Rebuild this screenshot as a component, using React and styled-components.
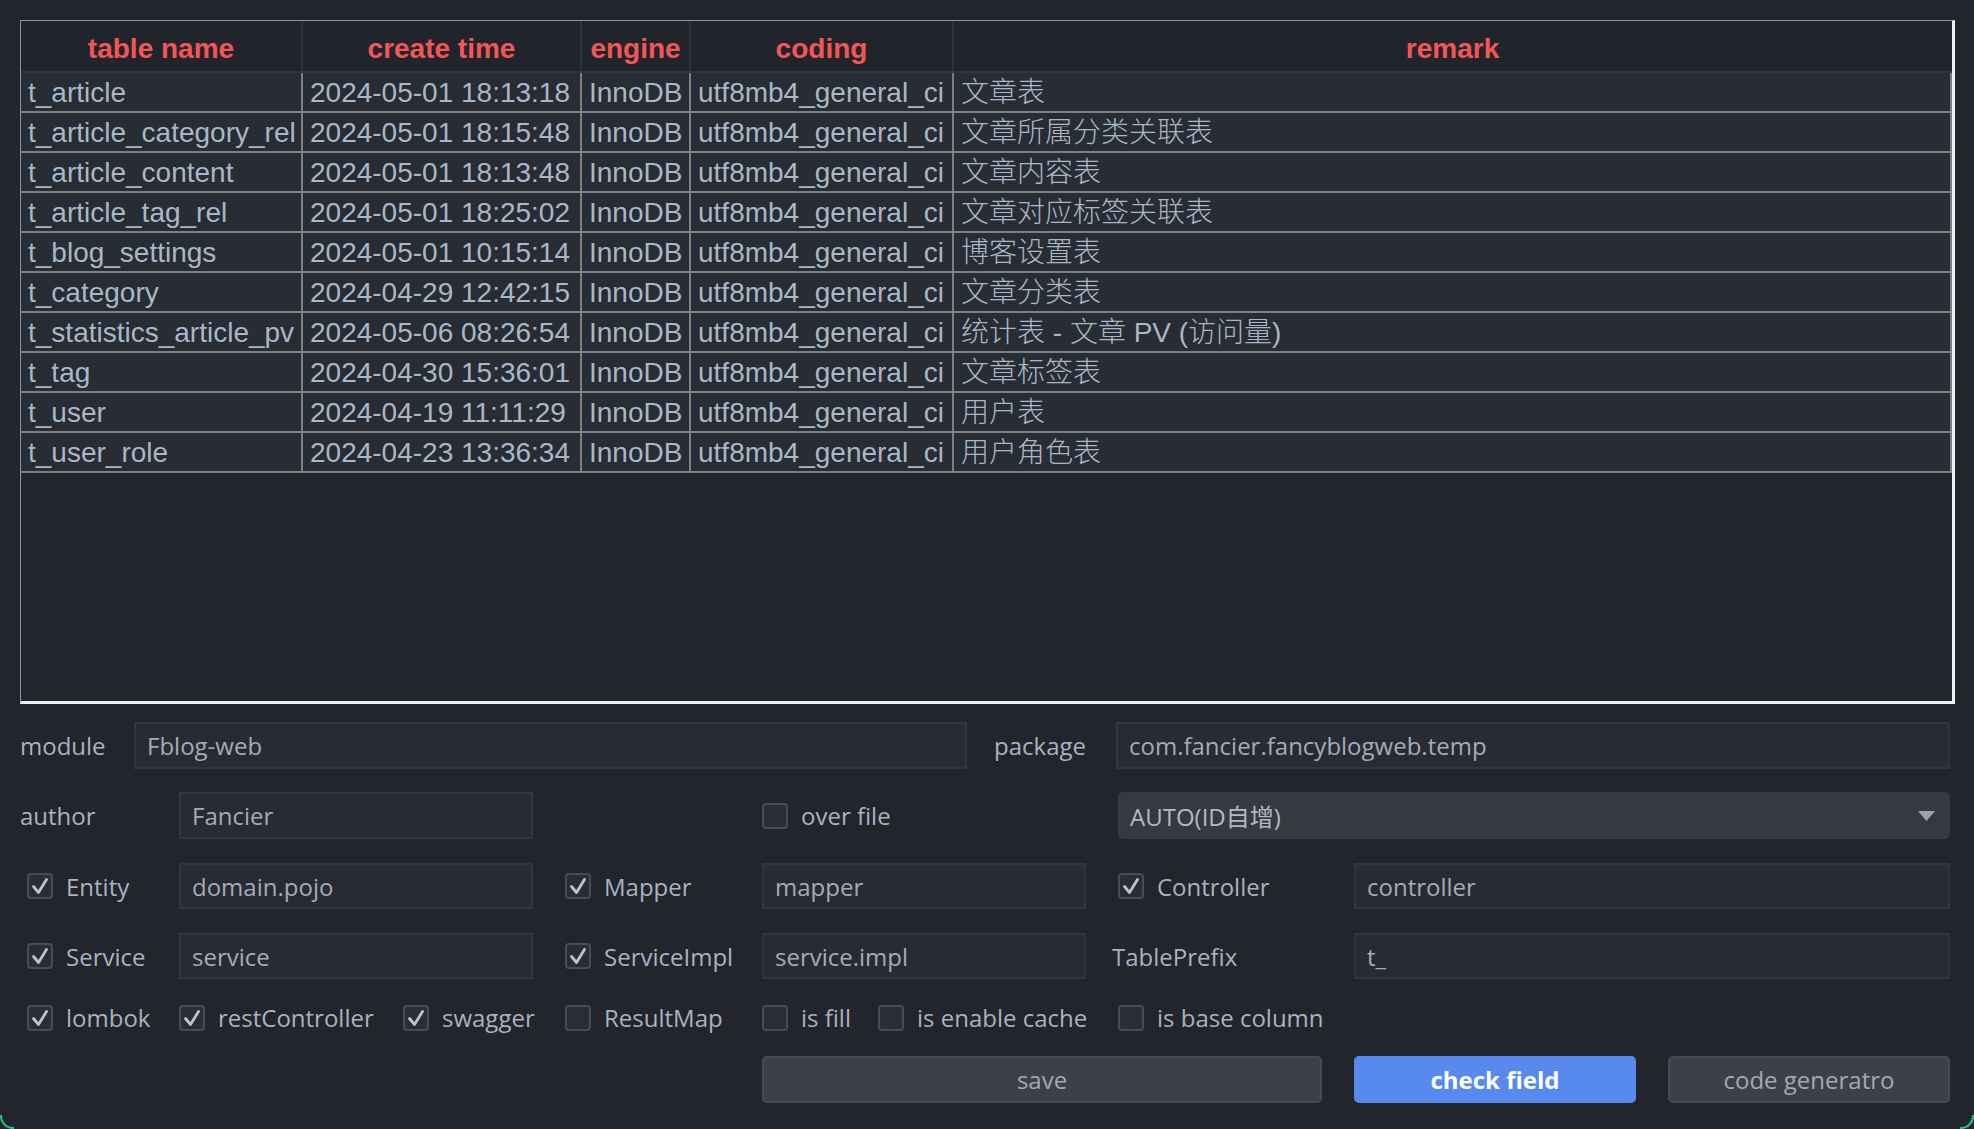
import React from "react";
import styled, { createGlobalStyle } from "styled-components";

const GlobalStyle = createGlobalStyle`
  html, body {
    margin: 0;
    padding: 0;
    background: #22252c;
    overflow: hidden;
  }
  #root { min-height: 1129px; }
  * { box-sizing: border-box; }
`;

const Page = styled.div`
  position: relative;
  width: 1974px;
  height: 1129px;
  padding: 20px 19px 0 20px;
  background: #22252c;
  display: flex;
  flex-direction: column;
`;

const TableFrame = styled.div`
  height: 684px;
  background: #23262d;
  border-top: 1px solid #8595ad;
  border-left: 1px solid #8595ad;
  border-right: 3px solid #eef0f3;
  border-bottom: 3px solid #eef0f3;
  overflow: hidden;
`;

const DataTable = styled.table`
  width: 100%;
  border-collapse: collapse;
  table-layout: fixed;
  font-family: "Liberation Sans", Arial, "Noto Sans CJK SC", sans-serif;
  font-size: 28px;
`;

const HeadCell = styled.th`
  height: 51px;
  padding: 5px 0 0;
  background: #21252b;
  color: #f35656;
  font-weight: 700;
  text-align: center;
  white-space: nowrap;
  border-bottom: 2px solid #33363c;
  border-right: ${(p) => (p.$last ? "none" : "2px solid #2e3239")};
`;

const BodyRow = styled.tr`
  background: #282c34;
`;

const BodyCell = styled.td`
  height: 40px;
  padding: 1px 0 0 7px;
  color: #a9b7c6;
  white-space: nowrap;
  overflow: hidden;
  border-right: 2px solid #7f7f7f;
  border-bottom: 2px solid #7f7f7f;
  line-height: 37px;
  font-weight: ${(p) => (p.$light ? 300 : 400)};
`;

const Form = styled.div`
  margin-top: 18px;
  margin-right: 5px;
  display: flex;
  flex-direction: column;
  gap: 23px;
  font-family: "Open Sans", "Noto Sans", "Noto Sans CJK SC", sans-serif;
  font-size: 24px;
  color: #a9b2c0;
`;

const TopRow = styled.div`
  display: grid;
  grid-template-columns: 114px 833px 1fr 834px;
  height: 47px;
  align-items: center;
`;

const FormGrid = styled.div`
  display: grid;
  grid-template-columns: 127px 192px 130px 165px 84px 208px 204px 282px 282px;
  grid-template-rows: 47px 46px 46px 29px 47px;
  column-gap: 32px;
  row-gap: 24px;
  align-items: center;
`;

const Cell = styled.div`
  grid-column: ${(p) => p.$col};
  grid-row: ${(p) => p.$row};
  align-self: stretch;
  display: flex;
  align-items: center;
  padding-left: ${(p) => p.$indent || 0}px;
  white-space: nowrap;
`;

const FieldLabel = styled.span`
  color: #a9b2c0;
  margin-left: ${(p) => p.$indent || 0}px;
  white-space: nowrap;
`;

const TextField = styled.div`
  height: 100%;
  width: 100%;
  display: flex;
  align-items: center;
  padding: 0 11px;
  background: #282b33;
  border: 2px solid #33363e;
  color: #a3abb8;
  white-space: nowrap;
`;

const CheckItem = styled.label`
  display: flex;
  align-items: center;
  gap: 13px;
  color: #a9b2c0;
  white-space: nowrap;
`;

const Box = styled.span`
  width: 26px;
  height: 26px;
  flex: none;
  display: flex;
  align-items: center;
  justify-content: center;
  border: 2px solid #474c56;
  border-radius: 4px;
  background: #2a2d34;
`;

const Combo = styled.div`
  height: 100%;
  width: 100%;
  display: flex;
  align-items: center;
  justify-content: space-between;
  padding: 0 15px 0 12px;
  background: #353940;
  border-radius: 5px;
  color: #b2b9c5;
  font-family: "Open Sans", "Noto Sans CJK SC", sans-serif;
`;

const Button = styled.button`
  width: 100%;
  height: 100%;
  border-radius: 5px;
  font-family: "Open Sans", "Noto Sans", sans-serif;
  font-size: 24px;
  cursor: pointer;
  background: ${(p) => (p.$primary ? "#5789ee" : "#3c4048")};
  border: 2px solid ${(p) => (p.$primary ? "#5789ee" : "#464a52")};
  color: ${(p) => (p.$primary ? "#ffffff" : "#a3a9b3")};
  font-weight: ${(p) => (p.$primary ? 700 : 400)};
`;

const Corner = styled.span`
  position: absolute;
  bottom: 0;
  ${(p) => (p.$side === "left" ? "left: 0;" : "right: 0;")}
  width: 14px;
  height: 14px;
  border-bottom: 2px solid #1ec781;
  ${(p) =>
    p.$side === "left"
      ? "border-left: 2px solid #1ec781; border-bottom-left-radius: 13px;"
      : "border-right: 2px solid #1ec781; border-bottom-right-radius: 13px;"}
`;

const columns = [
  { title: "table name", width: 281 },
  { title: "create time", width: 279 },
  { title: "engine", width: 109 },
  { title: "coding", width: 263 },
  { title: "remark", width: null },
];

const rows = [
  ["t_article", "2024-05-01 18:13:18", "文章表"],
  ["t_article_category_rel", "2024-05-01 18:15:48", "文章所属分类关联表"],
  ["t_article_content", "2024-05-01 18:13:48", "文章内容表"],
  ["t_article_tag_rel", "2024-05-01 18:25:02", "文章对应标签关联表"],
  ["t_blog_settings", "2024-05-01 10:15:14", "博客设置表"],
  ["t_category", "2024-04-29 12:42:15", "文章分类表"],
  ["t_statistics_article_pv", "2024-05-06 08:26:54", "统计表 - 文章 PV (访问量)"],
  ["t_tag", "2024-04-30 15:36:01", "文章标签表"],
  ["t_user", "2024-04-19 11:11:29", "用户表"],
  ["t_user_role", "2024-04-23 13:36:34", "用户角色表"],
];

function CheckMark() {
  return (
    <svg width="20" height="20" viewBox="0 0 20 20">
      <polyline
        points="3.5,10.5 8.5,16.5 16.5,3.5"
        fill="none"
        stroke="#bcc3ce"
        strokeWidth="2.8"
        strokeLinecap="round"
        strokeLinejoin="round"
      />
    </svg>
  );
}

function Check({ label, checked }) {
  return (
    <CheckItem>
      <Box>{checked && <CheckMark />}</Box>
      {label}
    </CheckItem>
  );
}

export default function App() {
  return (
    <>
      <GlobalStyle />
      <Page>
        <TableFrame>
          <DataTable>
            <colgroup>
              {columns.map((c) => (
                <col key={c.title} style={c.width ? { width: c.width } : undefined} />
              ))}
            </colgroup>
            <thead>
              <tr>
                {columns.map((c, i) => (
                  <HeadCell key={c.title} $last={i === columns.length - 1}>
                    {c.title}
                  </HeadCell>
                ))}
              </tr>
            </thead>
            <tbody>
              {rows.map(([name, time, remark]) => (
                <BodyRow key={name}>
                  <BodyCell>{name}</BodyCell>
                  <BodyCell>{time}</BodyCell>
                  <BodyCell>InnoDB</BodyCell>
                  <BodyCell>utf8mb4_general_ci</BodyCell>
                  <BodyCell $light>{remark}</BodyCell>
                </BodyRow>
              ))}
            </tbody>
          </DataTable>
        </TableFrame>

        <Form>
          <TopRow>
            <FieldLabel>module</FieldLabel>
            <TextField>Fblog-web</TextField>
            <FieldLabel $indent={27}>package</FieldLabel>
            <TextField>com.fancier.fancyblogweb.temp</TextField>
          </TopRow>

          <FormGrid>
            <Cell $row={1} $col="1"><FieldLabel>author</FieldLabel></Cell>
            <Cell $row={1} $col="2 / 4"><TextField>Fancier</TextField></Cell>
            <Cell $row={1} $col="5 / 7"><Check label="over file" /></Cell>
            <Cell $row={1} $col="7 / 10">
              <Combo>
                <span>AUTO(ID自增)</span>
                <svg width="17" height="10" viewBox="0 0 17 10">
                  <polygon points="0,0 17,0 8.5,10" fill="#9ea4ae" />
                </svg>
              </Combo>
            </Cell>

            <Cell $row={2} $col="1" $indent={7}><Check label="Entity" checked /></Cell>
            <Cell $row={2} $col="2 / 4"><TextField>domain.pojo</TextField></Cell>
            <Cell $row={2} $col="4"><Check label="Mapper" checked /></Cell>
            <Cell $row={2} $col="5 / 7"><TextField>mapper</TextField></Cell>
            <Cell $row={2} $col="7"><Check label="Controller" checked /></Cell>
            <Cell $row={2} $col="8 / 10"><TextField>controller</TextField></Cell>

            <Cell $row={3} $col="1" $indent={7}><Check label="Service" checked /></Cell>
            <Cell $row={3} $col="2 / 4"><TextField>service</TextField></Cell>
            <Cell $row={3} $col="4"><Check label="ServiceImpl" checked /></Cell>
            <Cell $row={3} $col="5 / 7"><TextField>service.impl</TextField></Cell>
            <Cell $row={3} $col="7"><FieldLabel $indent={-6}>TablePrefix</FieldLabel></Cell>
            <Cell $row={3} $col="8 / 10"><TextField>t_</TextField></Cell>

            <Cell $row={4} $col="1" $indent={7}><Check label="lombok" checked /></Cell>
            <Cell $row={4} $col="2"><Check label="restController" checked /></Cell>
            <Cell $row={4} $col="3"><Check label="swagger" checked /></Cell>
            <Cell $row={4} $col="4"><Check label="ResultMap" /></Cell>
            <Cell $row={4} $col="5"><Check label="is fill" /></Cell>
            <Cell $row={4} $col="6"><Check label="is enable cache" /></Cell>
            <Cell $row={4} $col="7 / 9"><Check label="is base column" /></Cell>

            <Cell $row={5} $col="5 / 8"><Button>save</Button></Cell>
            <Cell $row={5} $col="8"><Button $primary>check field</Button></Cell>
            <Cell $row={5} $col="9"><Button>code generatro</Button></Cell>
          </FormGrid>
        </Form>
        <Corner $side="left" />
        <Corner $side="right" />
      </Page>
    </>
  );
}
